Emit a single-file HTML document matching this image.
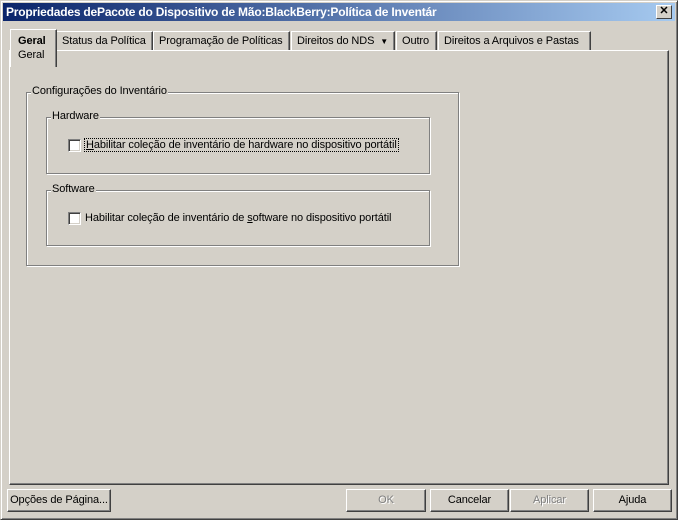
<!DOCTYPE html>
<html><head><style>
*{margin:0;padding:0;box-sizing:border-box}
body{width:678px;height:520px;background:#d4d0c8;font:11px "Liberation Sans",sans-serif;color:#000;position:relative;overflow:hidden;letter-spacing:-0.1px}
.win{position:absolute;left:0;top:0;width:678px;height:520px;border:1px solid;border-color:#d4d0c8 #404040 #404040 #d4d0c8;box-shadow:inset 1px 1px #fff,inset -1px -1px #808080}
.title{position:absolute;left:3px;top:3px;width:672px;height:18px;background:linear-gradient(to right,#0a246a,#a6caf0);color:#fff;font-weight:bold;font-size:12px;letter-spacing:-0.2px;line-height:18px;padding-left:3px}
.x{position:absolute;right:3px;top:2px;width:16px;height:14px;background:#d4d0c8;border:1px solid;border-color:#fff #404040 #404040 #fff;color:#000;font-size:11px;line-height:11px;text-align:center;letter-spacing:0}
.abs{position:absolute}
.panel{position:absolute;left:9px;top:50px;width:660px;height:435px;border:1px solid;border-color:#fff #404040 #404040 #fff;box-shadow:inset -1px -1px #808080}
.tab{position:absolute;top:31px;height:19px;border:1px solid;border-bottom:none;border-color:#fff #404040 #404040 #fff;box-shadow:inset -1px 0 #808080;padding:3px 0 0 5px;white-space:nowrap}
.sel{position:absolute;left:10px;top:29px;width:47px;height:38px;background:#d4d0c8;border:1px solid;border-bottom:none;border-color:#fff #404040 #404040 #fff;box-shadow:inset -1px 0 #808080;padding:4px 0 0 7px;line-height:14px;z-index:2}
.grp{position:absolute;border:1px solid #808080;box-shadow:1px 1px #fff,inset 1px 1px #fff}
.lg{position:absolute;top:-8px;left:4px;background:#d4d0c8;padding:0 1px}
.cb{position:absolute;width:13px;height:13px;background:#fff;border:1px solid;border-color:#808080 #fff #fff #808080;box-shadow:inset 1px 1px #404040,inset -1px -1px #d4d0c8}
.btn{position:absolute;top:489px;height:23px;border:1px solid;border-color:#fff #404040 #404040 #fff;box-shadow:inset -1px -1px #808080;text-align:center;line-height:21px}
.dis{color:#808080;text-shadow:1px 1px #fff}
</style></head><body>
<div class="win"></div>
<div class="title">Propriedades dePacote do Dispositivo de Mão:BlackBerry:Política de Inventár<div class="x">✕</div></div>
<div class="panel"></div>
<div class="tab" style="left:56px;width:97px">Status da Política</div>
<div class="tab" style="left:153px;width:137px">Programação de Políticas</div>
<div class="tab" style="left:291px;width:104px">Direitos do NDS &nbsp;<span style="font-size:8px">▼</span></div>
<div class="tab" style="left:396px;width:41px">Outro</div>
<div class="tab" style="left:438px;width:153px">Direitos a Arquivos e Pastas</div>
<div class="sel"><b>Geral</b><br>Geral</div>
<div class="grp" style="left:26px;top:92px;width:433px;height:174px"><span class="lg" style="left:4px">Configurações do Inventário</span></div>
<div class="grp" style="left:46px;top:117px;width:384px;height:57px"><span class="lg">Hardware</span></div>
<div class="grp" style="left:46px;top:190px;width:384px;height:56px"><span class="lg">Software</span></div>
<div class="cb" style="left:68px;top:139px"></div>
<div class="abs" style="left:85px;top:139px;outline:1px dotted #000;padding:0 1px"><u>H</u>abilitar coleção de inventário de hardware no dispositivo portátil</div>
<div class="cb" style="left:68px;top:212px"></div>
<div class="abs" style="left:85px;top:212px">Habilitar coleção de inventário de <u>s</u>oftware no dispositivo portátil</div>
<div class="btn" style="left:7px;width:104px">Opções de Pá<u>g</u>ina...</div>
<div class="btn dis" style="left:346px;width:80px">OK</div>
<div class="btn" style="left:430px;width:79px">Cancelar</div>
<div class="btn dis" style="left:510px;width:79px">Aplicar</div>
<div class="btn" style="left:593px;width:79px">Ajuda</div>
</body></html>
